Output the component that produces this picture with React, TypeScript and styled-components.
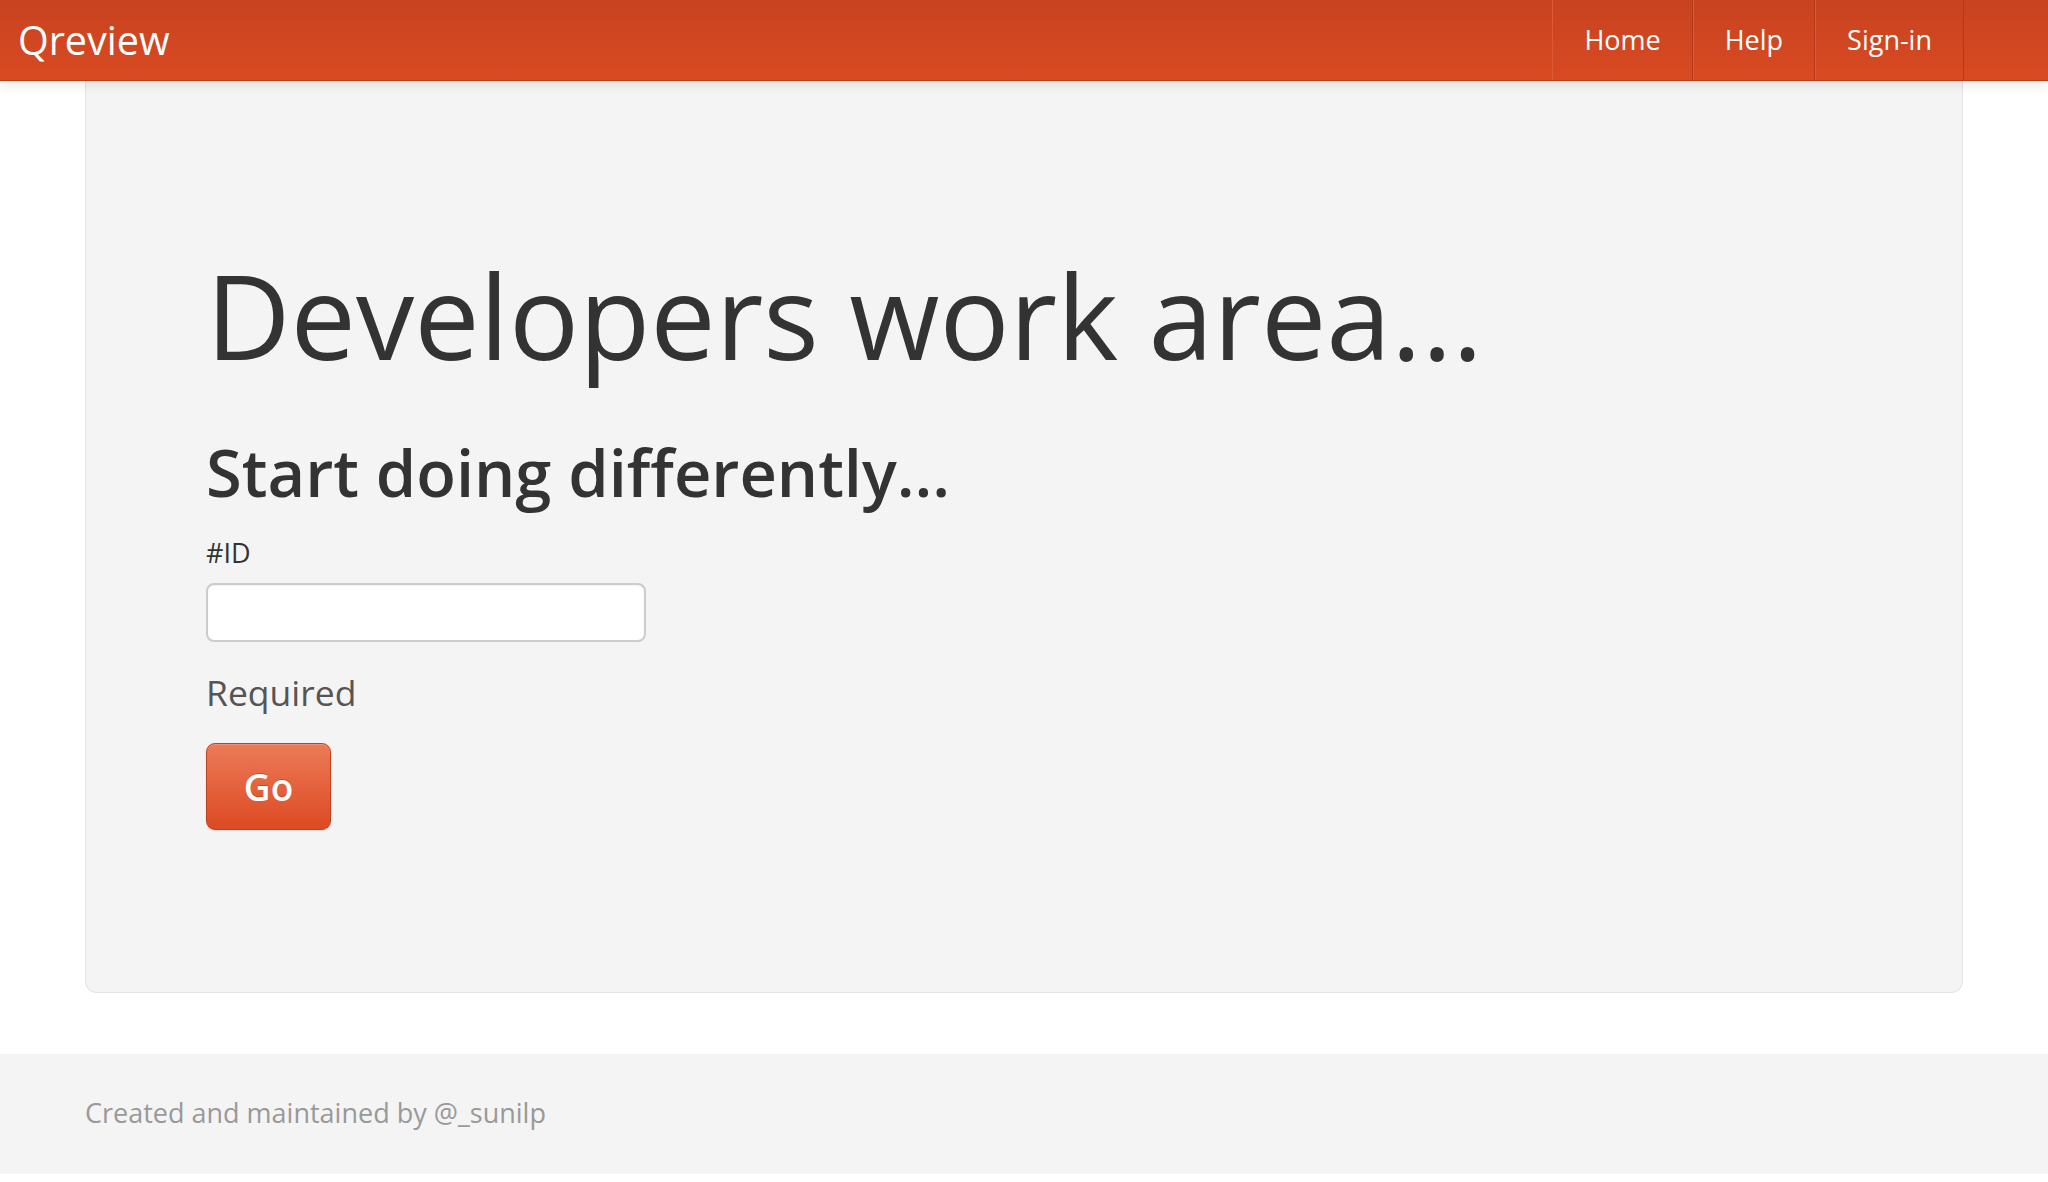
import styled, { createGlobalStyle } from "styled-components";

const GlobalStyle = createGlobalStyle`
   html, body {
      margin: 0;
      padding: 0;
      background: #ffffff;
   }

   body {
      font-family: "Open Sans", "Noto Sans", sans-serif;
      color: #333333;
   }

   * {
      box-sizing: border-box;
   }
`;

const navLinks = ["Home", "Help", "Sign-in"];

export default function App() {
   return (
      <>
         <GlobalStyle />
         <NavbarStyled>
            <Brand>Qreview</Brand>
            <NavList>
               {navLinks.map((label) => (
                  <NavItem key={label}>
                     <a href="#">{label}</a>
                  </NavItem>
               ))}
            </NavList>
         </NavbarStyled>

         <Container>
            <HeroUnit>
               <Title>Developers work area...</Title>
               <SubTitle>Start doing differently...</SubTitle>
               <form onSubmit={(e) => e.preventDefault()}>
                  <Label htmlFor="review-id">#ID</Label>
                  <InputText id="review-id" type="text" />
                  <HelpText>Required</HelpText>
                  <GoButton type="submit">Go</GoButton>
               </form>
            </HeroUnit>
         </Container>

         <Footer>
            <Container>
               <p>Created and maintained by @_sunilp</p>
            </Container>
         </Footer>
      </>
   );
}

const NavbarStyled = styled.header`
   position: relative;
   z-index: 2;
   display: flex;
   align-items: stretch;
   justify-content: space-between;
   height: 81px;
   padding: 0 84px 0 18px;
   background: linear-gradient(to bottom, #c84320 0%, #d84a22 100%);
   border-bottom: 1px solid #b93c1c;
   box-shadow: 0 2px 12px rgba(0, 0, 0, 0.12);
`;

const Brand = styled.a`
   font-size: 39.5px;
   line-height: 80px;
   color: #ffffff;
   text-decoration: none;
`;

const NavList = styled.ul`
   display: flex;
   margin: 0;
   padding: 0;
   list-style: none;
`;

const NavItem = styled.li`
   display: flex;
   border-left: 1px solid #de5a35;
   border-right: 1px solid #b33919;

   a {
      display: block;
      padding: 0 31px;
      font-size: 27px;
      line-height: 80px;
      color: #ffffff;
      text-decoration: none;
   }
`;

const Container = styled.div`
   width: 1878px;
   margin: 0 auto;
`;

const HeroUnit = styled.section`
   height: 912px;
   padding: 174px 120px 0;
   background-color: #f4f4f4;
   border: 1px solid #e4e4e4;
   border-top: none;
   border-radius: 0 0 12px 12px;
`;

const Title = styled.h1`
   margin: 0;
   font-size: 116.5px;
   font-weight: 400;
   line-height: 120px;
   color: #333333;
`;

const SubTitle = styled.h2`
   margin: 64px 0 0;
   font-size: 65px;
   font-weight: 600;
   line-height: 66px;
   color: #333333;
`;

const Label = styled.label`
   display: block;
   margin-top: 34px;
   font-size: 27px;
   line-height: 27px;
   color: #333333;
`;

const InputText = styled.input`
   display: block;
   width: 440px;
   height: 59px;
   margin-top: 17px;
   padding: 0 14px;
   font-family: inherit;
   font-size: 26px;
   background: #ffffff;
   border: 2px solid #cccccc;
   border-radius: 8px;
   box-shadow: inset 0 1px 2px rgba(0, 0, 0, 0.06);
   outline: none;
`;

const HelpText = styled.p`
   margin: 31px 0 0;
   font-size: 35.5px;
   line-height: 38px;
   color: #555555;
`;

const GoButton = styled.button`
   display: block;
   width: 125px;
   height: 87px;
   margin-top: 32px;
   padding: 0;
   font-family: inherit;
   font-size: 37px;
   font-weight: 600;
   color: #ffffff;
   text-shadow: 0 -1px 0 rgba(0, 0, 0, 0.2);
   background: linear-gradient(to bottom, #ec7b58 0%, #dc4a22 100%);
   border: 1px solid #c2401d;
   border-radius: 9px;
   box-shadow: inset 0 1px 0 rgba(255, 255, 255, 0.2), 0 1px 2px rgba(0, 0, 0, 0.1);
   cursor: pointer;
`;

const Footer = styled.footer`
   margin: 61px 0 8px;
   padding: 44px 0 47px;
   background-color: #f4f4f4;

   p {
      margin: 0;
      font-size: 27px;
      line-height: 29px;
      color: #999999;
   }
`;
